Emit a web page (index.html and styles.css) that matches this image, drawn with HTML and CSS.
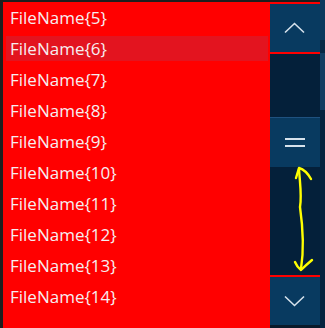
FILE: index.html
```html
<!DOCTYPE html>
<html lang="en">
<head>
    <meta charset="UTF-8">
    <title>File list</title>
    <link rel="stylesheet" href="styles.css">
</head>
<body>

    <div class="dropdown">
        <!-- list of files -->
        <ul class="file-list">
            <li class="file-item">FileName{5}</li>
            <li class="file-item selected">FileName{6}</li>
            <li class="file-item">FileName{7}</li>
            <li class="file-item">FileName{8}</li>
            <li class="file-item">FileName{9}</li>
            <li class="file-item">FileName{10}</li>
            <li class="file-item">FileName{11}</li>
            <li class="file-item">FileName{12}</li>
            <li class="file-item">FileName{13}</li>
            <li class="file-item">FileName{14}</li>
        </ul>

        <div class="scrollbar">
            <button class="scroll-btn">
                <svg width="22" height="12" viewBox="0 0 22 12"><polyline points="1,10.5 10.5,1.5 20,10.5" fill="none" stroke="#d6e2ec" stroke-width="1.6"/></svg>
            </button>
            <div class="track">
                <div class="thumb">
                    <span class="grip"></span>
                    <span class="grip"></span>
                </div>
            </div>
            <button class="scroll-btn">
                <svg width="22" height="12" viewBox="0 0 22 12"><polyline points="1,1.5 10.5,10.5 20,1.5" fill="none" stroke="#d6e2ec" stroke-width="1.6"/></svg>
            </button>
            <div class="scroll-foot"></div>
        </div>
    </div>
    <div class="edge"></div>

    <!-- hand drawn note over the track -->
    <svg class="note" width="325" height="328" viewBox="0 0 325 328">
        <g fill="none" stroke="#ffff00" stroke-width="2.4" stroke-linecap="round" stroke-linejoin="round">
            <path d="M299 169 C300 185, 302 196, 300 207 C303 228, 304 250, 301 269"/>
            <path d="M296 178 L299 168 Q306 170 311 179"/>
            <path d="M295 262 Q297 267 301 270 Q306 265 312 260"/>
        </g>
    </svg>

</body>
</html>
```

FILE: styles.css
```css
body {
    margin: 0;
    width: 325px;
    height: 328px;
    overflow: hidden;
    background-color: #1e1e1e;
    display: flex;
    font-family: "Open Sans", "Noto Sans", sans-serif;
}

.dropdown {
    margin: 2px 0 0 3px;
    width: 317px;
    height: 326px;
    background-color: #ff0000;
    display: flex;
}

.file-list {
    list-style: none;
    margin: 0;
    padding: 3px 2px 0 3px;
    flex: 1;
    display: flex;
    flex-direction: column;
    gap: 6px;
}

.file-item {
    height: 25px;
    line-height: 25px;
    padding-left: 4px;
    font-size: 17px;
    color: #f6eef0;
}

.file-item.selected {
    background-color: #e3141f;
}

.scrollbar {
    width: 50px;
    display: flex;
    flex-direction: column;
    gap: 2px;
    padding-top: 2px;
}

.scroll-btn {
    height: 48px;
    flex: none;
    border: none;
    padding: 0;
    background-color: #083a60;
    display: flex;
    justify-content: center;
    align-items: center;
}

.track {
    flex: 1;
    background-color: #04203a;
}

.thumb {
    margin-top: 63px;
    height: 50px;
    box-sizing: border-box;
    background-color: #083a60;
    border-top: 1px solid #1f5280;
    display: flex;
    flex-direction: column;
    justify-content: center;
    align-items: center;
    gap: 5px;
}

.grip {
    width: 20px;
    height: 2px;
    background-color: #d6e2ec;
}

.scroll-foot {
    height: 3px;
    margin-top: -2px;
    background-color: #0a1a2a;
}

.edge {
    width: 5px;
    height: 328px;
    background: linear-gradient(#0b3a5e 0 40px, #072844 40px 53px, #123e62 53px 110px, #062440 110px);
}

.note {
    position: absolute;
    top: 0;
    left: 0;
    pointer-events: none;
}
```
